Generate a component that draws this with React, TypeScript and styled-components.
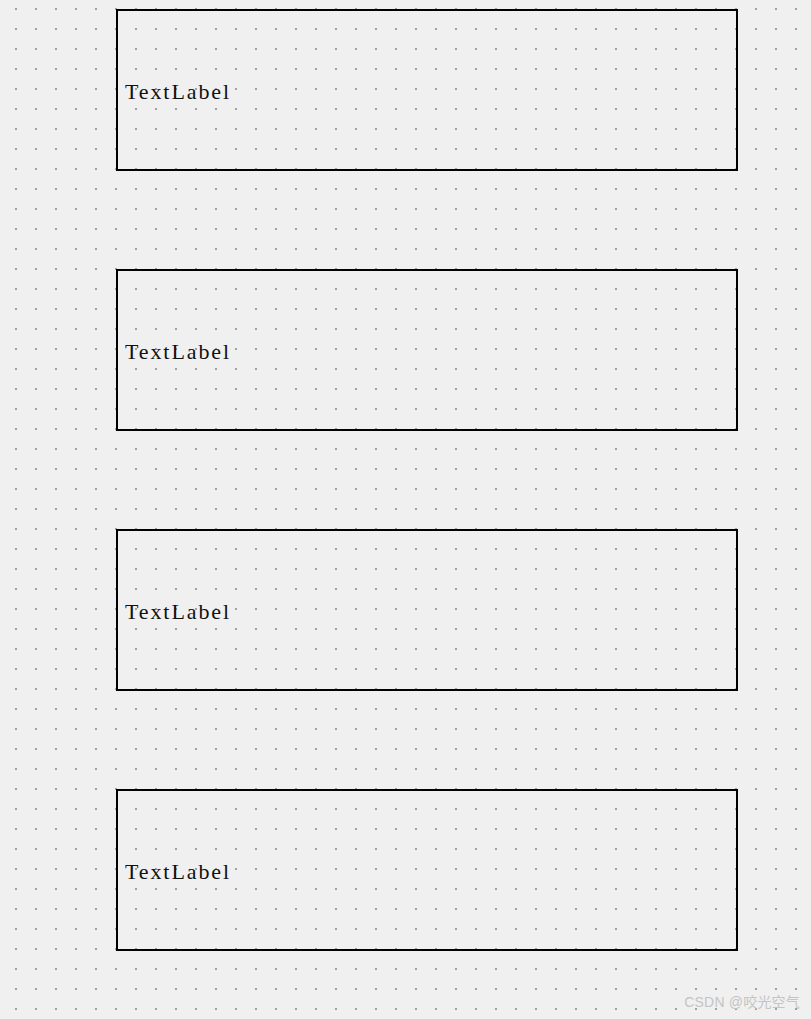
import React from "react";
import styled, { createGlobalStyle } from "styled-components";

const dotGrid =
  "url(\"data:image/svg+xml;utf8,<svg xmlns='http://www.w3.org/2000/svg' width='20' height='20'><rect width='2' height='2' fill='%23a0a0a0'/></svg>\")";

const GlobalStyle = createGlobalStyle`
  html, body {
    margin: 0;
    padding: 0;
    background-color: #f0f0f0;
  }
`;

const Canvas = styled.div`
  position: relative;
  min-height: 1019px;
  box-sizing: border-box;
  padding: 9px 0 0 116px;
  background-color: #f0f0f0;
  background-image: ${dotGrid};
  background-position: 15px 8px;
  background-size: 20px 20px;
  display: flex;
  flex-direction: column;
  gap: 98px;
`;

const Frame = styled.div`
  box-sizing: border-box;
  width: 622px;
  height: 162px;
  border: 2px solid #000;
  display: flex;
  align-items: center;
  padding: 3px 0 0 7px;
`;

const Label = styled.span`
  font-family: "Liberation Serif", "Times New Roman", serif;
  font-size: 22px;
  letter-spacing: 1.9px;
  color: #111;
  line-height: 1;
`;

const Watermark = styled.div`
  position: absolute;
  right: 11px;
  bottom: 8px;
  font-family: "Liberation Sans", "Noto Sans CJK SC", sans-serif;
  font-size: 14px;
  color: #c4c4c4;
  letter-spacing: 0.2px;
`;

const labels = ["TextLabel", "TextLabel", "TextLabel", "TextLabel"];

const App: React.FC = () => {
  return (
    <>
      <GlobalStyle />
      <Canvas>
        {labels.map((text, i) => (
          <Frame key={i}>
            <Label>{text}</Label>
          </Frame>
        ))}
        <Watermark>CSDN @咬光空气</Watermark>
      </Canvas>
    </>
  );
};

export default App;
